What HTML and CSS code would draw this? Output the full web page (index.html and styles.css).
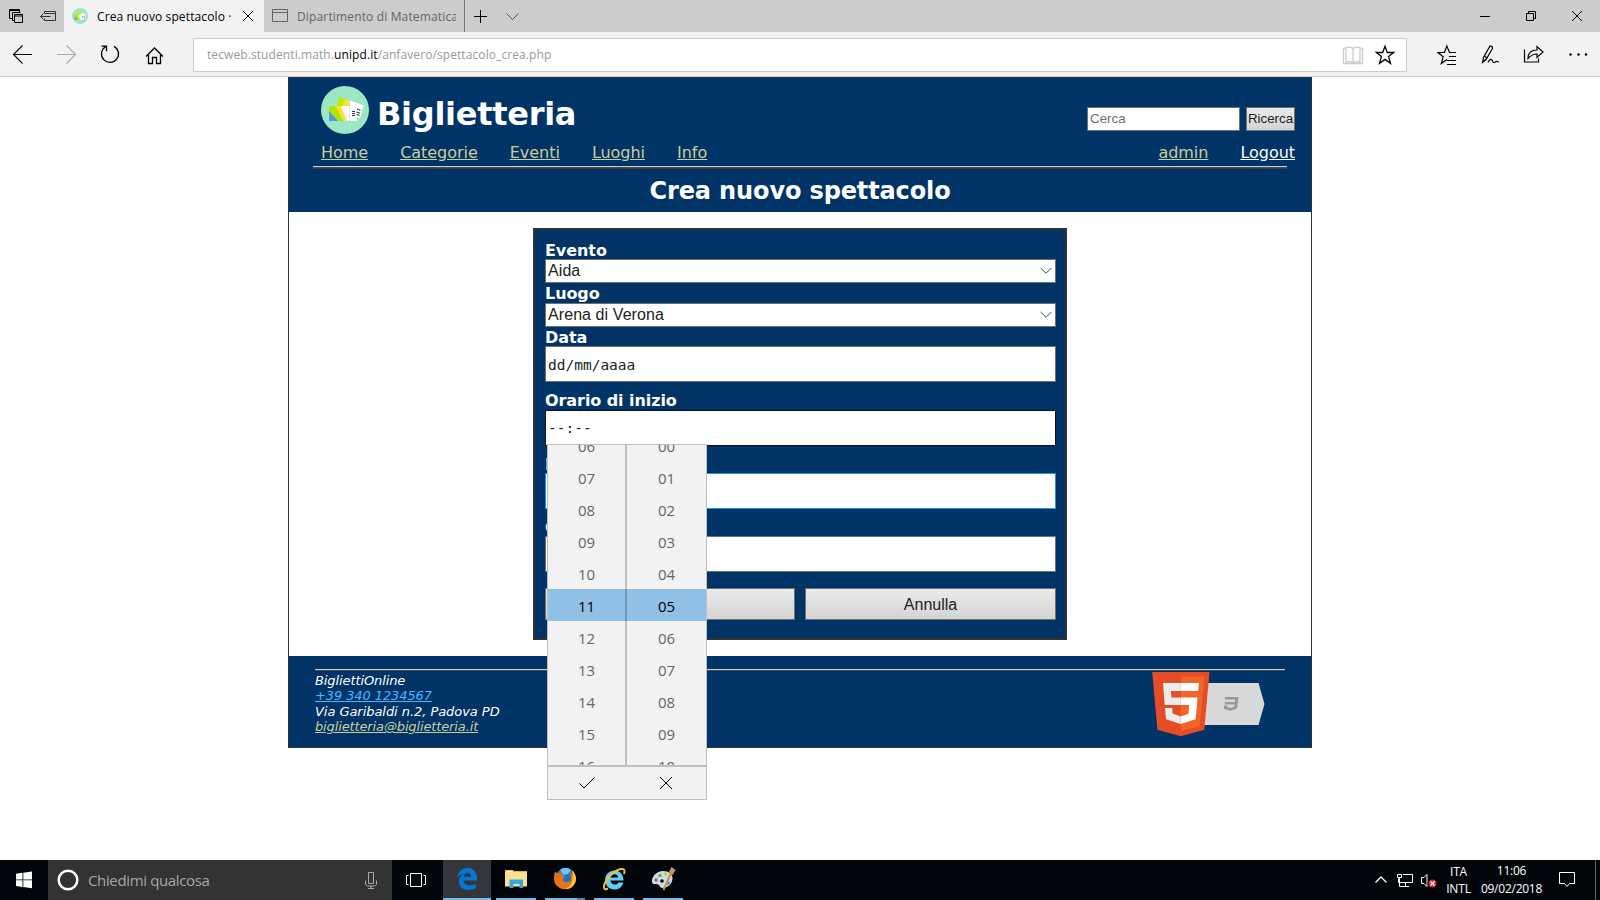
FILE: index.html
```html
<!DOCTYPE html>
<html lang="it">
<head>
<meta charset="utf-8">
<title>Crea nuovo spettacolo</title>
<link rel="stylesheet" href="styles.css">
</head>
<body>
<div class="tabbar">
  <svg class="line tab-actions" width="64" height="32" viewBox="0 0 64 32">
    <path d="M12.500 18.500h-3v-9h10v3M9.500 10.500h10M12.500 12.500h8M12.500 12.500v8h2"/>
    <path d="M14.500 14.500h8v8h-8zM14.500 16h8"/>
    <g stroke="#333"><path d="M44.500 13.500v-2h11v9h-11v-2M44.500 13.500h11M40.500 16.500h10M43.500 13.500l-3 3 3 3"/></g>
  </svg>
  <div class="tab tab-active">
    <svg width="16" height="16" viewBox="0 0 48 48"><use href="#ticket-logo"/></svg>
    <span class="tab-title">Crea nuovo spettacolo ·</span>
    <svg class="line" width="10" height="10" viewBox="0 0 10 10"><path d="M0 0l10 10M10 0L0 10"/></svg>
  </div>
  <div class="tab tab-idle">
    <svg class="line" width="16" height="14" viewBox="0 0 16 14"><path stroke="#666" d="M.5.5h15v12H.5zM.5 3.500h15"/></svg>
    <span class="tab-title">Dipartimento di Matematica</span>
  </div>
  <svg class="line" width="80" height="32" viewBox="465 0 80 32"><path d="M474 16.500h13M480.500 10v13"/><path stroke="#555" d="M506.500 13.500l6 6 6-6"/></svg>
  <svg class="line window-controls" width="130" height="32" viewBox="1470 0 130 32"><path d="M1480 16.500h10M1526.500 13.500h7v7h-7zM1528.500 13.500v-2h7v7h-2M1572 11l10 10M1582 11l-10 10"/></svg>
</div>

<div class="toolbar">
  <svg class="line" width="193" height="44" viewBox="0 32 193 44">
    <path stroke-width="1.100" d="M13 54.500h19M22.500 45.500l-9 9 9 9"/>
    <path stroke="#aaa" stroke-width="1.100" d="M57 54.500h19M66.500 45.500l9 9-9 9"/>
    <path stroke-width="1.300" d="M105.500 46.700a8.500 8.500 0 1 0 8.500-.3M101.500 46.200h5v5"/>
    <path stroke-width="1.300" d="M146 56.500l8.500-8.500 8.500 8.500M148.500 55v8.500h4v-6h4v6h4V55"/>
  </svg>
  <div class="address">
    <span class="url">tecweb.studenti.math.<b>unipd.it</b>/anfavero/spettacolo_crea.php</span>
    <svg class="line" width="66" height="32" viewBox="1340 39 66 32">
      <path stroke="#ccc" stroke-width="1.300" d="M1353 48.500c-2-1.500-5-1.500-7-1v14.500c2-.5 5-.5 7 1 2-1.500 5-1.500 7-1V47.500c-2-.5-5-.5-7 1zv14M1345 48.500h-1.500v15h19v-15h-1.500"/>
      <path stroke-width="1.300" d="M1385 46.300l2.300 6.200h6.400l-5.100 4.100 1.900 6.700-5.500-3.900-5.500 3.900 1.900-6.700-5.100-4.100h6.400z"/>
    </svg>
  </div>
  <svg class="line" width="193" height="44" viewBox="1407 32 193 44">
    <path stroke-width="1.200" d="M1456 52.500h-6.500l-2.700-6.500-2.300 6.500h-6.500l5.200 4.200-1.900 6.800 5.700-4M1449 56.500h7M1447 60.500h9M1447 64.500h9"/>
    <path stroke-width="1.200" d="M1482.500 62.500l1-5 6.500-11.500 2.200.5.3 2-6.500 11zl3-3M1484 56l2.500 1.500M1488 62.500c2-4 3.500-4 4.500-1.500 1 3 2.500 1 3.500.5 1.500-.5 2 .5 3 .5"/>
    <path stroke-width="1.200" d="M1524.500 49.500v12.500h14v-3.500M1528 58.500c0-5 3-8.500 9-8.500v-3.500l6 5.500-6 5.500v-3.500c-4 0-6 1-9 4.500z"/>
    <g fill="#000" stroke="none"><circle cx="1570.500" cy="54.500" r="1.200"/><circle cx="1578.500" cy="54.500" r="1.200"/><circle cx="1586" cy="54.500" r="1.200"/></g>
  </svg>
</div>

<div class="page">
  <header class="header">
    <div class="brand">
      <svg class="logo" width="48" height="48" viewBox="0 0 48 48">
        <g id="ticket-logo">
          <circle cx="24" cy="24" r="24" fill="#9be6c4"/>
          <path fill="#b4f000" d="M15.500 19l2.300-8 7 2.500-3 8z"/>
          <path fill="#ffdf33" d="M24 13l5 1.500-2 8-6-1z"/>
          <path fill="#fff" d="M29 14.500l13.500 4.800-3.500 13.200-11-4z"/>
          <path fill="#5a93ee" d="M8 20v15h10z"/>
          <path fill="#a9e800" d="M8 20h7l7 15h-5L8 25z"/>
          <path fill="#ffdf33" d="M14 20h9l3 15h-3z"/>
          <path fill="#fff" d="M20 20h16v15H26z"/>
          <path stroke="#335" stroke-width="1.200" d="M31 25.500h3M31 27.500h3M31 29.500h3M36 23l3.500 1.200M35.500 26l3.500 1.200M35.500 28.500l3 1"/>
          <path stroke="#ccd" stroke-dasharray="1 1" d="M28.500 20v15"/>
        </g>
      </svg>
      <h1 class="site-name">Biglietteria</h1>
      <form class="search"><input class="search-field" type="text" placeholder="Cerca"><button class="search-button" type="button">Ricerca</button></form>
    </div>
    <nav class="menu">
      <a>Home</a><a>Categorie</a><a>Eventi</a><a>Luoghi</a><a>Info</a>
      <a class="push">admin</a><a class="logout">Logout</a>
    </nav>
    <div class="rule header-rule"></div>
    <h2 class="title">Crea nuovo spettacolo</h2>
  </header>

  <main class="main">
    <div class="form">
      <label class="label">Evento</label>
      <div class="select"><span>Aida</span><svg class="line" width="12" height="8" viewBox="0 0 12 8"><path stroke="#444" d="M.7 1l5.300 5.300L11.300 1"/></svg></div>
      <label class="label label-mid">Luogo</label>
      <div class="select"><span>Arena di Verona</span><svg class="line" width="12" height="8" viewBox="0 0 12 8"><path stroke="#444" d="M.7 1l5.300 5.300L11.300 1"/></svg></div>
      <label class="label">Data</label>
      <div class="field">dd/mm/aaaa</div>
      <label class="label label-spaced">Orario di inizio</label>
      <div class="picker-anchor">
        <div class="field field-active">--:--</div>
        <div class="picker">
          <div class="wheels">
            <div class="wheel"><span>06</span><span>07</span><span>08</span><span>09</span><span>10</span><span class="chosen">11</span><span>12</span><span>13</span><span>14</span><span>15</span><span>16</span></div>
            <div class="wheel"><span>00</span><span>01</span><span>02</span><span>03</span><span>04</span><span class="chosen">05</span><span>06</span><span>07</span><span>08</span><span>09</span><span>10</span></div>
          </div>
          <div class="picker-actions">
            <svg class="line" width="16" height="12" viewBox="0 0 16 12"><path d="M.5 6.500L5 11 15.500.5"/></svg>
            <svg class="line" width="12" height="12" viewBox="0 0 12 12"><path d="M0 0l12 12M12 0L0 12"/></svg>
          </div>
        </div>
      </div>
      <label class="label label-late">Durata</label>
      <div class="field field-hover"></div>
      <label class="label label-late">Costo</label>
      <div class="field"></div>
      <div class="buttons"><div class="button"></div><div class="button">Annulla</div></div>
    </div>
  </main>

  <footer class="footer">
    <div class="rule footer-rule"></div>
    <div class="footer-row">
      <address class="contacts">
        <span class="c-name">BigliettiOnline</span>
        <a class="c-phone">+39 340 1234567</a>
        <span class="c-street">Via Garibaldi n.2, Padova PD</span>
        <a class="c-mail">biglietteria@biglietteria.it</a>
      </address>
      <svg class="badge" width="114" height="66" viewBox="1152 671 114 66">
        <path fill="#d9d9d9" d="M1200 683h58.500l6 21-6 21H1200z"/>
        <path fill="#999" d="M1225 697h13.500l-1.300 11.200-6.700 2.800-6.800-2.300.4-3.200h3l-.1 1.300 3.500 1.100 3.700-1.300.3-2.100h-9.800l.3-2.500h9.900l.2-2.400h-10.400z"/>
        <path fill="#e44d26" d="M1152.200 672h57.300l-5.200 57.700-23.500 6.500-23.400-6.500z"/>
        <path fill="#f16529" d="M1180.700 676.500h23.500l-4.400 49.500-19.100 5.200z"/>
        <path fill="#ebebeb" d="M1163 683h17.700v8h-9.800l.6 6.500h9.200v7.500h-16zM1165 708h7.200l.4 5.600 8.100 2.900v7.500l-14.600-4.700z"/>
        <path fill="#fff" d="M1180.700 683h18.200l-.7 8h-17.500zM1180.700 697.500h16.900l-2 21.800-14.900 4.700v-7.500l7.800-2.700.6-8.800h-8.400z"/>
      </svg>
    </div>
  </footer>
</div>

<div class="taskbar">
  <svg width="48" height="40" viewBox="0 860 48 40"><path fill="#fff" d="M16 873.700l6.500-.9v6.700H16zM23.300 872.700L32 871.500v8h-8.700zM16 880.300h6.500v6.700l-6.500-.9zM23.300 880.300H32v8l-8.700-1.200z"/></svg>
  <div class="ask">
    <svg width="22" height="22" viewBox="0 0 22 22"><circle cx="11" cy="11" r="9.300" fill="none" stroke="#fff" stroke-width="2.500"/></svg>
    <span>Chiedimi qualcosa</span>
    <svg class="line" width="12" height="17" viewBox="0 0 12 17"><path stroke="#aaa" d="M3.500.5h5v11h-5zM.5 8.500v4l2 1.500h7l2-1.500v-4M6 14v2.500M3 16.500h6"/></svg>
  </div>
  <svg class="line" width="51" height="40" viewBox="392 860 51 40"><path stroke="#fff" d="M410.500 873.500h11v13h-11zM408.500 875.500h-2v9h2M423.500 875.500h2v9h-2"/></svg>
  <div class="app app-focus"><svg width="22" height="22" viewBox="0 0 22 22"><path fill="#0078d7" d="M1 10C2 4 6 0 11.500 0 17.500 0 21 4.500 21 10v2.500H7.500c.3 3.500 3 5 6 5 2.300 0 4.500-.7 6.300-1.700v4.500C18 21.400 15.500 22 12.500 22 6 22 3 18 3 13.500 3 10 5 7.300 8 6 5 6.200 2.500 7.500 1 10zM7.700 8.700h7.600C15.300 6.300 14 5 11.700 5 9.300 5 8 6.700 7.700 8.700z"/></svg></div>
  <div class="app"><svg width="22" height="20" viewBox="0 0 22 20"><path fill="#e8b63c" d="M0 1h8l1 1h13v4H0z"/><path fill="#fbe18c" d="M0 3h22v14.500H0z"/><path fill="#fff" d="M1.500 1.800h6v1h-6z"/><path fill="#35a4e0" d="M4.500 10.500h13.500V19h-3.500v-4h-6v4h-4z"/></svg></div>
  <div class="app app-stack"><svg width="24" height="24" viewBox="0 0 24 24"><circle cx="12.500" cy="11" r="10" fill="#1c77c2"/><path fill="#6fc2ee" d="M7 3c3-3 8-3 11 0l-3 4-5 1z"/><path fill="#e8701a" d="M2 4.500l2.500 2 3-1.500c0 3 3 3.500 4.500 4L9.500 12c.5 4 6 4 8 1.500 1-2 .5-5-.5-7 1.500 0 2-2 2-3.500 6 6 5 13 0 17-5 3.500-12 3-16-2C.5 14.500.5 9 2 4.500z"/><path fill="#ffc83a" d="M19 3c5.500 6 5 12.500 0 17-2 1.500-5 2.200-7 2 5-2 8-7 7.500-12.500C20.500 8 20 5 19 3z"/></svg></div>
  <div class="app"><svg width="24" height="24" viewBox="0 0 24 24"><path fill="#62cdf3" d="M3 12.500C3.500 7 7.500 3.500 12.500 3.500c5.500 0 9 4 9 10H8.500c.5 2.500 2 4 4.500 4 1.500 0 2.700-.5 3.500-2h5c-1.500 4.500-4.500 7-9 7-5.500 0-9.500-4-9.500-10zM8.500 10.500h7.700c-.3-2-1.700-3.200-3.700-3.200-2.200 0-3.600 1.200-4 3.200z"/><path fill="none" stroke="#f5c22e" stroke-width="2" d="M22 7c1-3 .5-5-1.500-5C14 1.500 3 12 2 19c-.5 3.500 1 4 4 2.500"/></svg></div>
  <div class="app"><svg width="25" height="24" viewBox="0 0 25 24"><path fill="#c9dcec" d="M1 15C.5 9 6 4 12 4c6 0 10 3.500 9.500 8-.5 5-5 9-10 9-3 0-2.500-3-4.500-3.500C4.500 17 1.500 18 1 15z"/><circle cx="5" cy="13" r="1.700" fill="#dd4a3b"/><circle cx="9" cy="8.500" r="1.700" fill="#5fb848"/><circle cx="14.500" cy="7" r="1.700" fill="#f3b51c"/><circle cx="17" cy="16" r="1.700" fill="#3b86d4"/><circle cx="11" cy="14" r="1.800" fill="#02050a"/><path stroke="#d98b3c" stroke-width="2" d="M20 6l-7.500 17"/><path fill="#c49a6c" d="M18 5l2.500-5 4 3-3 5z"/></svg></div>
  <svg class="line tray" width="96" height="40" viewBox="1350 860 96 40">
    <g stroke="#fff"><path stroke-width="1.300" d="M1375.500 882.500l5.500-5.500 5.500 5.500"/><path d="M1403 874.500h9.500v8h-14v-4M1397.500 874.500h4v3h-4zM1399.500 878v8.500h9M1405.500 883v3M1402 886.500h7"/><path d="M1421.500 877.500h2.500l3-3v12l-3-3h-2.500z"/></g>
    <circle cx="1432.500" cy="883.500" r="4.500" fill="#d9272e"/><path stroke="#fff" stroke-width="1.300" d="M1430.500 881.500l4 4M1434.500 881.500l-4 4"/>
  </svg>
  <div class="tray-text lang"><span>ITA</span><span>INTL</span></div>
  <div class="tray-text clock"><span class="time">11:06</span><span>09/02/2018</span></div>
  <svg class="line" width="50" height="40" viewBox="1545 860 50 40"><path stroke="#fff" d="M1559.500 872.500h15v11h-5l-2.500 3-2.500-3h-5z"/></svg>
  <div class="peek"></div>
</div>
</body>
</html>
```

FILE: styles.css
```css
* { box-sizing: border-box; }
body {
  margin: 0;
  width: 1600px;
  height: 900px;
  display: flex;
  flex-direction: column;
  overflow: hidden;
  background: #fff;
  font-family: "DejaVu Sans", sans-serif;
}
svg { display: block; flex: none; }
.line { fill: none; stroke: #000; stroke-width: 1; }

/* Browser window */
.tabbar, .toolbar, .tab, .address, .tab-title, .ask, .tray-text, .wheel { font-family: "Open Sans", "Noto Sans", sans-serif; }
.tabbar { display: flex; height: 32px; background: #ccc; flex: none; }
.tab { display: flex; align-items: center; width: 200px; padding-left: 8px; font-size: 12px; }
.tab-active { background: #f2f2f2; }
.tab-title { margin-left: 9px; white-space: nowrap; overflow: hidden; line-height: 33px; }
.tab-active .tab-title { width: 138px; margin-right: 8px; letter-spacing: .12px; }
.tab-idle { width: 201px; border-right: 1px solid #777; color: #666; }
.tab-idle .tab-title { width: 159px; letter-spacing: .15px; }
.window-controls { margin-left: auto; }
.toolbar { display: flex; height: 45px; flex: none; background: #f2f2f2; border-bottom: 1px solid #ccc; }
.address { display: flex; align-items: center; width: 1214px; height: 34px; margin-top: 6px; background: #fff; border: 1px solid #ccc; }
.url { flex: 1; padding-left: 13px; font-size: 12px; color: #999; line-height: 32px; letter-spacing: .09px; }
.url b { font-weight: 400; color: #000; }

/* Site */
.page { width: 1024px; height: 671px; margin: 0 auto; flex: none; border: 1px solid #333; display: flex; flex-direction: column; }
.header { height: 134px; background: #036; color: #fff; flex: none; }
.brand { display: flex; height: 64px; padding-left: 32px; padding-right: 16px; }
.logo { margin-top: 8px; }
.site-name { margin: 0 0 0 8px; padding-top: 9px; font-size: 32px; line-height: 54px; letter-spacing: -.28px; }
.search { display: flex; gap: 6px; margin: 29px 0 0 auto; height: 24px; }
.search-field, .search-button { height: 24px; border: 1px solid #707070; border-radius: 0; font: 13.333px "Liberation Sans", sans-serif; }
.search-field { width: 153px; padding: 0 2px 2px; background: #fff; }
.search-field::placeholder { color: #6d6d6d; }
.search-button { width: 49px; padding: 0 0 2px; background: linear-gradient(#eaeaea, #d4d4d4); color: #222; white-space: nowrap; }
.menu { display: flex; gap: 32px; height: 24px; padding: 0 16px 0 32px; font-size: 16px; line-height: 21px; color: #cc9; letter-spacing: -.03px; }
.menu a { text-decoration: underline; }
.push { margin-left: auto; }
.logout { color: #fff; }
.rule { border-top: 1px solid #ccc; background: linear-gradient(#555, #333); }
.header-rule { height: 3px; margin: 0 24px; }
.title { margin: 0; text-align: center; font-size: 24px; line-height: 45px; height: 43px; letter-spacing: -.13px; }
.main { height: 444px; padding-top: 16px; flex: none; }
.form { width: 534px; height: 412px; margin: 0 auto; padding: 10px 9px 0 10px; background: #036; border: 2px solid #333; display: flex; flex-direction: column; }
.label { height: 19px; flex: none; font-size: 16px; font-weight: 700; line-height: 21px; color: #fff; letter-spacing: -.07px; }
.label-mid { height: 20px; }
.label-spaced { margin-top: 8px; height: 20px; }
.label-late { margin-top: 8px; }
.select { display: flex; align-items: center; justify-content: space-between; height: 24px; flex: none; padding: 0 3px 0 2px; background: #fff; border: 1px solid #707070; font: 16px/22px "Liberation Sans", sans-serif; color: #222; letter-spacing: .08px; }
.field { height: 36px; flex: none; padding-left: 2px; background: #fff; border: 1px solid #707070; font: 14.5px/36px "DejaVu Sans Mono", monospace; color: #222; }
.field-active { border-color: #111; line-height: 34px; }
.field-hover { border-color: #1c97dd; }
.buttons { display: grid; grid-template-columns: 250px 251px; gap: 10px; margin-top: 16px; }
.button { height: 32px; border: 1px solid #707070; background: linear-gradient(#eaeaea, #d4d4d4); text-align: center; font: 16px/32px "Liberation Sans", sans-serif; color: #222; }

/* Time picker */
.picker-anchor { position: relative; }
.picker { position: absolute; left: 2px; top: 34px; width: 160px; height: 356px; background: #f2f2f2; border: 1px solid #bfbfbf; z-index: 2; }
.wheels { display: grid; grid-template-columns: 79px 79px; height: 320px; overflow: hidden; }
.wheel { height: 352px; margin-top: -16px; font-size: 15px; color: #666; letter-spacing: -.2px; }
.wheel:first-child { border-right: 2px solid #bfbfbf; }
.wheel span { display: block; height: 32px; line-height: 35px; text-align: center; }
.wheel .chosen { background: #91c0e7; color: #000; }
.wheel:first-child .chosen { margin-right: -2px; padding-right: 2px; box-shadow: inset -2px 0 #7299b8; }
.picker-actions { display: grid; grid-template-columns: 78px 79px; height: 34px; border-top: 2px solid #bfbfbf; align-items: center; justify-items: center; }

/* Footer */
.footer { height: 91px; padding: 13px 26px 0; background: #036; color: #fff; flex: none; }
.footer-rule { height: 2px; }
.footer-row { display: flex; justify-content: space-between; padding-right: 19px; }
.contacts { display: flex; flex-direction: column; padding-top: 2px; font-size: 13px; line-height: 15.4px; letter-spacing: -.1px; }
.contacts a { text-decoration: underline; }
.c-phone { color: #4bf; }
.c-street { letter-spacing: -.05px; }
.c-mail { color: #cc9; letter-spacing: -.13px; }

/* Taskbar */
.taskbar { display: flex; width: 1600px; height: 40px; margin-top: auto; flex: none; background: #02050a; color: #fff; }
.ask { display: flex; align-items: center; width: 344px; padding: 0 15px 0 9px; background: #333; color: #a6a6a6; font-size: 15px; letter-spacing: -.36px; }
.ask span { flex: 1; margin-left: 9px; }
.app { display: flex; align-items: center; justify-content: center; width: 40px; height: 40px; margin-right: 9px; border-bottom: 2px solid #76b9ed; }
.app-focus { width: 48px; margin-right: 5px; background: #34363b; }
.app-stack { border-image: linear-gradient(90deg, #76b9ed 31px, #5586ae 31px) 2; }
.tray { margin-left: auto; }
.tray-text { display: flex; flex-direction: column; align-items: center; font-size: 12px; line-height: 17px; padding-top: 3px; letter-spacing: -.15px; }
.lang { width: 25px; }
.clock { width: 65px; margin: 0 1px 0 8px; letter-spacing: -.25px; }
.clock .time { margin-top: -1px; margin-bottom: 1px; }
.peek { width: 5px; border-left: 1px solid #666; }
```
